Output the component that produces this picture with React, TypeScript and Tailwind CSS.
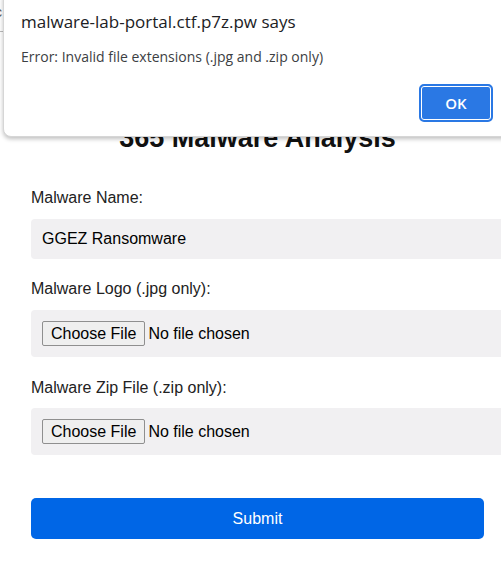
import React from "react";

function FileBox() {
  return (
    <div className="flex h-[47px] w-[475px] items-center rounded-[4px] bg-[#f1f0f2] px-[11px]">
      <span className="flex h-[25px] items-center rounded-[2px] border border-[#8f8f8f] bg-[#efefef] px-[8px] text-[16px] leading-none text-black">
        Choose File
      </span>
      <span className="ml-[3px] text-[16px] text-black">No file chosen</span>
    </div>
  );
}

export default function App() {
  return (
    <div
      className="relative h-[565px] w-[501px] overflow-hidden bg-white text-black"
      style={{ fontFamily: '"Liberation Sans", Arial, sans-serif' }}
    >
      <div className="ml-[31px] w-[453px] pt-[123px]">
        <h1 className="text-center text-[27px] font-bold leading-[31px] text-[#111]">
          365 Malware Analysis
        </h1>

        <div className="mt-[35px] text-[16px] leading-[18px] text-[#222]">Malware Name:</div>
        <div className="mt-[12px] flex h-[40px] w-[475px] items-center rounded-[4px] bg-[#f1f0f2] px-[11px] text-[16px] text-black">
          GGEZ Ransomware
        </div>

        <div className="mt-[21px] text-[16px] leading-[18px] text-[#222]">Malware Logo (.jpg only):</div>
        <div className="mt-[12px]">
          <FileBox />
        </div>

        <div className="mt-[22px] text-[16px] leading-[18px] text-[#222]">Malware Zip File (.zip only):</div>
        <div className="mt-[11px]">
          <FileBox />
        </div>

        <button className="mt-[43px] flex h-[41px] w-[453px] items-center justify-center rounded-[5px] bg-[#0066e6] text-[16px] text-white">
          Submit
        </button>
      </div>

      {/* page glimpse behind dialog */}
      <div className="absolute left-[-5px] top-[2px] text-[14px] text-[#555]">c</div>
      <div className="absolute left-0 top-[31px] h-px w-[3px] bg-[#bbb]" />

      {/* alert dialog */}
      <div
        className="absolute left-[3px] top-[-10px] h-[147px] w-[520px] rounded-[8px] border border-[#d6d6d6] bg-white shadow-[0_2px_4px_rgba(0,0,0,0.25)]"
        style={{ fontFamily: '"Open Sans", "Noto Sans", sans-serif' }}
      >
        <div className="pl-[17px] pt-[19px] text-[17px] leading-[24px] text-[#202124]">
          malware-lab-portal.ctf.p7z.pw says
        </div>
        <div className="mt-[13px] pl-[17px] text-[14px] leading-[20px] text-[#3c4043]">
          Error: Invalid file extensions (.jpg and .zip only)
        </div>
        <div className="absolute left-[415px] top-[93px] flex h-[38px] w-[74px] items-center justify-center rounded-[5px] border-2 border-[#2a78e4] bg-[#2a78e4] text-[15px] font-semibold text-white shadow-[inset_0_0_0_1px_#fff]">
          OK
        </div>
      </div>
    </div>
  );
}
